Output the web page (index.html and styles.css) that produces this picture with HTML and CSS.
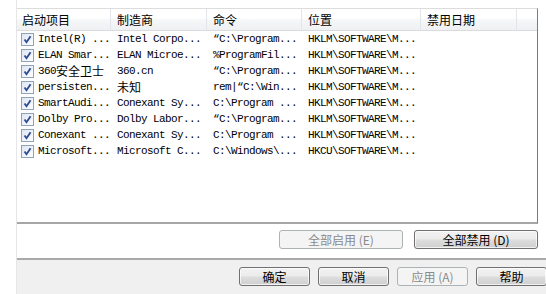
FILE: index.html
```html
<!DOCTYPE html>
<html lang="zh-CN">
<head>
<meta charset="utf-8">
<title>启动</title>
<link rel="stylesheet" href="styles.css">
</head>
<body>
<div class="dialog">
  <div class="list">
    <div class="header">
      <div class="hcell">启动项目</div>
      <div class="hcell">制造商</div>
      <div class="hcell">命令</div>
      <div class="hcell">位置</div>
      <div class="hcell">禁用日期</div>
      <div class="hcell last"></div>
    </div>
    <div class="rows">
      <div class="row"><div class="cell first"><span class="chk"></span>Intel(R) ...</div><div class="cell">Intel Corpo...</div><div class="cell">“C:\Program...</div><div class="cell">HKLM\SOFTWARE\M...</div></div>
      <div class="row"><div class="cell first"><span class="chk"></span>ELAN Smar...</div><div class="cell">ELAN Microe...</div><div class="cell">%ProgramFil...</div><div class="cell">HKLM\SOFTWARE\M...</div></div>
      <div class="row"><div class="cell first"><span class="chk"></span>360<span class="cjk">安全卫士</span></div><div class="cell">360.cn</div><div class="cell">“C:\Program...</div><div class="cell">HKLM\SOFTWARE\M...</div></div>
      <div class="row"><div class="cell first"><span class="chk"></span>persisten...</div><div class="cell"><span class="cjk">未知</span></div><div class="cell">rem|“C:\Win...</div><div class="cell">HKLM\SOFTWARE\M...</div></div>
      <div class="row"><div class="cell first"><span class="chk"></span>SmartAudi...</div><div class="cell">Conexant Sy...</div><div class="cell">C:\Program ...</div><div class="cell">HKLM\SOFTWARE\M...</div></div>
      <div class="row"><div class="cell first"><span class="chk"></span>Dolby Pro...</div><div class="cell">Dolby Labor...</div><div class="cell">“C:\Program...</div><div class="cell">HKLM\SOFTWARE\M...</div></div>
      <div class="row"><div class="cell first"><span class="chk"></span>Conexant ...</div><div class="cell">Conexant Sy...</div><div class="cell">C:\Program ...</div><div class="cell">HKLM\SOFTWARE\M...</div></div>
      <div class="row"><div class="cell first"><span class="chk"></span>Microsoft...</div><div class="cell">Microsoft C...</div><div class="cell">C:\Windows\...</div><div class="cell">HKCU\SOFTWARE\M...</div></div>
    </div>
  </div>
  <div class="actions">
    <button class="btn wide disabled">全部启用 (E)</button>
    <button class="btn wide">全部禁用 (D)</button>
  </div>
  <div class="footer">
    <button class="btn">确定</button>
    <button class="btn">取消</button>
    <button class="btn disabled">应用 (A)</button>
    <button class="btn">帮助</button>
  </div>
</div>
</body>
</html>
```
FILE: styles.css
```css
html, body {
  margin: 0;
  padding: 0;
  background: #ffffff;
}
body {
  width: 546px;
  height: 294px;
  overflow: hidden;
  font-family: "Noto Sans CJK SC", "Liberation Sans", sans-serif;
  color: #000;
}
.dialog {
  margin-left: 16px;
  padding-top: 8px;
  border-left: 1px solid #e6e6e6;
  width: 529px;
}
.list {
  width: 520px;
  height: 213px;
  border-top: 1px solid #dcdcdc;
  border-right: 1px solid #7c7c7c;
  border-bottom: 2px solid #a6a6a6;
  background: #fff;
}
.header {
  display: grid;
  grid-template-columns: 94px 96px 95px 119px 96px 1fr;
  height: 21px;
  border-bottom: 1px solid #d9dbde;
  background: linear-gradient(#ffffff 0%, #ffffff 45%, #f6f7f9 50%, #eff0f2 100%);
}
.hcell {
  font-size: 12px;
  line-height: 21px;
  padding-left: 6px;
  border-right: 1px solid #e2e5ea;
  white-space: nowrap;
  overflow: hidden;
}
.hcell:first-child { padding-left: 5px; }
.hcell.last { border-right: none; }
.rows {
  display: flex;
  flex-direction: column;
}
.row {
  display: grid;
  grid-template-columns: 94px 96px 95px 119px;
  height: 16px;
}
.cell {
  font-family: "Liberation Mono", monospace;
  font-size: 11px;
  letter-spacing: -0.6px;
  line-height: 16px;
  padding-left: 6px;
  white-space: nowrap;
  overflow: hidden;
  display: flex;
  align-items: center;
}
.cell.first { padding-left: 4px; }
.cjk {
  font-family: "Noto Sans CJK SC", sans-serif;
  font-size: 12px;
  letter-spacing: 0;
}
.chk {
  width: 11px;
  height: 11px;
  flex: none;
  margin-right: 4px;
  border: 1px solid #8fa2bd;
  background:
    url("data:image/svg+xml,%3Csvg xmlns='http://www.w3.org/2000/svg' width='11' height='11'%3E%3Cpath d='M2.5 5.5 L4.5 8.2 L8.6 2.2' fill='none' stroke='%23284a9b' stroke-width='1.8'/%3E%3C/svg%3E") center/11px 11px no-repeat,
    linear-gradient(135deg, #dfe6f0, #ffffff);
}
.actions {
  height: 34px;
  display: flex;
  justify-content: flex-end;
  align-items: flex-start;
  gap: 11px;
  padding-top: 6px;
  padding-right: 8px;
  box-sizing: border-box;
}
.footer {
  border-top: 2px solid #a9a9a9;
  background: #f0f0f0;
  height: 40px;
  display: flex;
  justify-content: flex-start;
  align-items: flex-start;
  gap: 8px;
  padding-top: 7px;
  padding-left: 222px;
  box-sizing: border-box;
  overflow: hidden;
}
.btn {
  font-family: "Noto Sans CJK SC", sans-serif;
  font-size: 12px;
  height: 19px;
  width: 71px;
  flex: none;
  padding: 0;
  line-height: 16px;
  border: 1px solid #707070;
  border-radius: 3px;
  background: linear-gradient(#f2f2f2 0%, #ebebeb 48%, #dddddd 52%, #cfcfcf 100%);
  color: #000;
  box-shadow: inset 0 0 0 1px rgba(255,255,255,0.7);
}
.btn.wide { width: 124px; }
.btn.disabled {
  border-color: #adb2b5;
  background: #f4f4f4;
  color: #8a8a8a;
  box-shadow: none;
}
```
